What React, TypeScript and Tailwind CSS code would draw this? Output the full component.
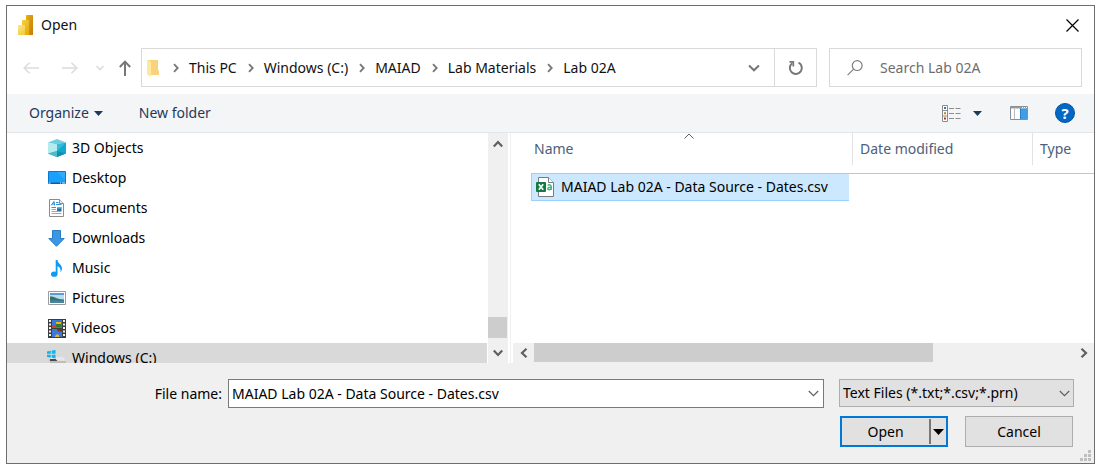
import React, { useState } from "react";

type IconProps = { className?: string };

function Chevron({ className = "", d, box = "0 0 12 12", stroke = 2, w = 12, h = 12 }: IconProps & { d: string; box?: string; stroke?: number; w?: number; h?: number }) {
  return (
    <svg aria-hidden="true" width={w} height={h} viewBox={box} fill="none" stroke="currentColor" strokeWidth={stroke} className={`shrink-0 ${className}`}>
      <path d={d} />
    </svg>
  );
}

const Caret = () => (
  <svg aria-hidden="true" width="9" height="5" viewBox="0 0 9 5" className="shrink-0 fill-[#1e395b]">
    <path d="M0 0H9L4.5 5Z" />
  </svg>
);

const PowerBiIcon = () => (
  <svg aria-hidden="true" width="15" height="20" viewBox="0 0 15 20" className="shrink-0">
    <defs>
      <linearGradient id="pb1" x1="0" y1="0" x2="1" y2="1"><stop stopColor="#e8b117" /><stop offset="1" stopColor="#c47a0a" /></linearGradient>
      <linearGradient id="pb2" x1="0" y1="0" x2="0.6" y2="1"><stop stopColor="#f5d13f" /><stop offset="1" stopColor="#e6ad10" /></linearGradient>
      <linearGradient id="pb3" x1="0" y1="0" x2="0.6" y2="1"><stop stopColor="#fae78c" /><stop offset="1" stopColor="#f2cf3e" /></linearGradient>
    </defs>
    <path d="M8.5 0H14.4Q15 0 15 .6V19.4Q15 20 14.4 20H8V.6Q8 0 8.5 0Z" fill="url(#pb1)" />
    <path d="M4.6 5H10.4Q11 5 11 5.6V20H4V5.6Q4 5 4.6 5Z" fill="url(#pb2)" />
    <path d="M.6 10H6.4Q7 10 7 10.6V20H.6Q0 20 0 19.4V10.6Q0 10 .6 10Z" fill="url(#pb3)" />
  </svg>
);

const FolderIcon = () => (
  <svg aria-hidden="true" width="12" height="18" viewBox="0 0 12 18" className="shrink-0">
    <path d="M1 1H10.5V11.5H12V16H1Z" fill="#f6cb63" />
    <path d="M4 3V16H12V12H11V1H1Z" fill="#f9d37b" />
    <path d="M0 1H1L4 3V18L0 15.5Z" fill="#ffe9a2" />
  </svg>
);

const BackIcon = () => <Chevron w={16} h={12} box="0 0 16 12" stroke={1.6} d="M6.5 .8 1.2 6 6.5 11.2M1.2 6H16" />;
const ForwardIcon = () => <Chevron w={16} h={12} box="0 0 16 12" stroke={1.6} d="M9.5 .8 14.8 6 9.5 11.2M14.8 6H0" />;
const UpIcon = () => <Chevron w={12} h={16} box="0 0 12 16" stroke={2} d="M.8 7 6 1.6 11.2 7M6 1.6V16" />;

const RefreshIcon = () => (
  <svg aria-hidden="true" width="16" height="16" viewBox="0 0 16 16" fill="none" stroke="#777" strokeWidth="2">
    <path d="M10.5 2.6A6 6 0 1 1 4.2 3.2" />
    <path d="M1.5 1.9H5.3V6.4" strokeWidth="1.7" />
  </svg>
);

const SearchIcon = () => (
  <svg aria-hidden="true" width="16" height="16" viewBox="0 0 16 16" fill="none" stroke="#7d7d7d" strokeWidth="1.2">
    <circle cx="10.2" cy="5.6" r="4.9" />
    <path d="M6.6 9.2.6 15.2" />
  </svg>
);

const ViewIcon = () => (
  <svg aria-hidden="true" width="19" height="17" viewBox="0 0 19 17">
    <path d="M.5 .5H5.5V16.5H.5ZM.5 5.5H5.5M.5 11H5.5" fill="#fff" stroke="#8c8c8c" />
    <path d="M7 3.5H12M13.5 3.5H18.5M7 8.5H12M13.5 8.5H18.5M7 13.5H12M13.5 13.5H18.5" stroke="#8c8c8c" />
    <path d="M2 2H4V4H2Z" fill="#3f73a8" />
    <path d="M2 7.3H4V9.3H2Z" fill="#b8862f" />
    <path d="M2 12.5H4V14.5H2Z" fill="#c42b1c" />
  </svg>
);

const PreviewPaneIcon = () => (
  <svg aria-hidden="true" width="18" height="14" viewBox="0 0 18 14">
    <path d="M.5 .5H17.5V13.5H.5Z" fill="#fff" stroke="#8a8f96" />
    <path d="M1 1H17V2.5H1Z" fill="#979ca2" />
    <path d="M12 1h1v1h-1zM14 1h1v1h-1zM16 1h1v1h-1z" fill="#fff" />
    <path d="M4.5 3V13" stroke="#b5bac0" />
    <path d="M10 2.5H17V13H10Z" fill="#429ce3" />
    <path d="M10.5 2.5V13" stroke="#2b7fc4" />
  </svg>
);

const ObjectsIcon = () => (
  <svg aria-hidden="true" width="18" height="18" viewBox="0 0 18 18">
    <path d="M0 3.5 9 5.2V18L0 14.6Z" fill="#a5e5ea" />
    <path d="M18 3.5 9 5.2V18L18 14.6Z" fill="#12a9cf" />
    <path d="M0 3.5 9 0 18 3.5 9 5.6Z" fill="#6ccfe0" />
    <path d="M0 14.6 9 12 18 14.6 9 18Z" fill="#1590a9" />
    <path d="M0 14.6 9 12V5.6L0 3.5Z" fill="#b4ebee" />
    <path d="M0 14.6 9 12V18Z" fill="#4bbcc9" />
    <path d="M9 5.6 18 3.5 9 12Z" fill="#35bbd9" />
  </svg>
);

const DesktopIcon = () => (
  <svg aria-hidden="true" width="18" height="14" viewBox="0 0 18 14">
    <path d="M.5 .5H17.5V12.5H.5Z" fill="#18a0fb" stroke="#0b78cf" />
    <path d="M9 1H17V9Z" fill="#43b4fc" opacity=".6" />
    <path d="M1 11.5H17V13H1Z" fill="#075fae" />
    <path d="M1 11.5H2.5V12.5H1ZM12 11.5H13V12.5H12ZM14 11.5H17V12.5H14Z" fill="#e3f3ff" />
  </svg>
);

const DocumentIcon = () => (
  <svg aria-hidden="true" width="15" height="18" viewBox="0 0 15 18">
    <path d="M.5 .5H10.5L14.5 4.5V17.5H.5Z" fill="#fff" stroke="#8b8b8b" />
    <path d="M10.5 .5V4.5H14.5" fill="#e8e8e8" stroke="#8b8b8b" />
    <path d="M2 6.5 5 2.5 5.5 6.5M3.3 5H5.3" fill="none" stroke="#1586d3" />
    <path d="M7 3.5H9.500M7 5.5H12.500M2.500 8.500H7" stroke="#2b93d8" />
    <path d="M2.500 10.500H7M2.500 12.500H12.500M2.500 14.500H12.500" stroke="#a6a6a6" />
    <path d="M8 8H12.500V12H8Z" fill="#2f6c96" />
    <path d="M8 8H12.500V9.500H8Z" fill="#5eb4e6" />
  </svg>
);

const DownloadIcon = () => (
  <svg aria-hidden="true" width="17" height="17" viewBox="0 0 17 17">
    <path d="M4.5 .5H12.5V8.5H16.2L8.5 16.3.8 8.5H4.5Z" fill="#3b97e3" stroke="#2a7cc6" />
  </svg>
);

const MusicIcon = () => (
  <svg aria-hidden="true" width="11" height="17" viewBox="0 0 11 17" fill="#0c9bf5">
    <ellipse cx="3.2" cy="14.2" rx="3.2" ry="2.6" />
    <path d="M4.7 0H6.5C6.7 3.5 11 4.5 11 8.5 11 10.2 10.3 11.3 9.5 12 10 8.5 8.5 7 6.5 6.3V14H4.7Z" />
  </svg>
);

const PictureIcon = () => (
  <svg aria-hidden="true" width="18" height="14" viewBox="0 0 18 14">
    <path d="M.5 .5H17.5V13.5H.5Z" fill="#fff" stroke="#9b9b9b" />
    <path d="M2 2H16V12H2Z" fill="#b9dcf5" />
    <path d="M2 2H16V4H2Z" fill="#5c9bd8" />
    <path d="M2 5.5C6 4.8 8 8 16 8.5V10H2Z" fill="#397567" />
    <path d="M2 9.5H16V12H2Z" fill="#4685a2" />
  </svg>
);

const VideoIcon = () => (
  <svg aria-hidden="true" width="18" height="19" viewBox="0 0 18 19">
    <path d="M0 0H18V19H0Z" fill="#3d3d3d" />
    <path d="M2 1V18M16 1V18" stroke="#f4f4f4" strokeWidth="2" strokeDasharray="2 1.5" />
    <path d="M4 1H14V9H4ZM4 10H14V18H4Z" fill="#3c78d8" />
    <path d="M4 6H8V9H4Z" fill="#d3402b" />
    <path d="M8 3H13V5H8Z" fill="#e9b71d" />
    <path d="M8 5H13V8H8Z" fill="#2f7d35" />
    <path d="M9 10H14V12.5H10Z" fill="#8b2a20" />
    <path d="M7 17 9 15 11 16V18H7Z" fill="#e5b32a" />
  </svg>
);

const DriveIcon = () => (
  <svg aria-hidden="true" width="20" height="19" viewBox="0 0 20 19">
    <path d="M3 8H17L20 12V16H3Z" fill="#e6e6e6" />
    <path d="M3 12H20V16H3Z" fill="#bdbdbd" />
    <path d="M3 10H9L11 12H3Z" fill="#4a4a4a" />
    <path d="M0 2 4 1.3V4.5H0ZM5 1.2 9 .5V4.5H5ZM0 5.5H4V8.7L0 8ZM5 5.5H9V9.5L5 8.8Z" fill="#12b3ee" />
  </svg>
);

const CsvIcon = () => (
  <svg aria-hidden="true" width="18" height="20" viewBox="0 0 18 20" className="shrink-0">
    <path d="M2.5 .5H12.5L17.5 5.5V19.5H2.5Z" fill="#fff" stroke="#7b7b7b" />
    <path d="M12.5 .5V5.5H17.5" fill="#fff" stroke="#7b7b7b" />
    <rect y="5" width="10" height="10" rx="1" fill="#107c41" />
    <path d="M2.8 7.3 7.2 12.7M7.2 7.3 2.8 12.7" stroke="#fff" strokeWidth="1.7" />
    <path d="M11.8 8.3C13 7.5 15.2 7.5 15.2 9.5V13M15.2 10.3C13 10.1 11.8 10.7 11.8 11.7 11.8 13 14.2 13.2 15.2 11.7" fill="none" stroke="#2fb879" strokeWidth="1.4" />
  </svg>
);

const places = [
  { name: "3D Objects", icon: <ObjectsIcon /> },
  { name: "Desktop", icon: <DesktopIcon /> },
  { name: "Documents", icon: <DocumentIcon /> },
  { name: "Downloads", icon: <DownloadIcon /> },
  { name: "Music", icon: <MusicIcon /> },
  { name: "Pictures", icon: <PictureIcon /> },
  { name: "Videos", icon: <VideoIcon /> },
  { name: "Windows (C:)", icon: <DriveIcon />, current: true },
];

const crumbs = ["This PC", "Windows (C:)", "MAIAD", "Lab Materials", "Lab 02A"];

function TitleBar() {
  return (
    <header className="flex h-[38px] items-center gap-2 pr-[15px] pl-[11px]">
      <PowerBiIcon />
      <h1 className="flex-1">Open</h1>
      <button type="button" aria-label="Close" className="text-black">
        <Chevron w={13} h={13} box="0 0 13 13" stroke={1.2} d="M.5 .5 12.5 12.5M12.5 .5 .5 12.5" />
      </button>
    </header>
  );
}

function NavigationBar() {
  return (
    <div className="flex h-[50px] items-start pt-1 pr-3 pl-4">
      <div className="flex h-[39px] w-[118px] shrink-0 items-center text-[#dcdcdc]">
        <button type="button" aria-label="Back" className="mr-[23px]"><BackIcon /></button>
        <button type="button" aria-label="Forward" className="mr-[18px]"><ForwardIcon /></button>
        <button type="button" aria-label="Recent locations" className="mr-[15px]"><Chevron w={8} h={6} box="0 0 8 6" stroke={1.6} d="M.6 1 4 4.5 7.4 1" /></button>
        <button type="button" aria-label="Up" className="text-[#777]"><UpIcon /></button>
      </div>
      <div className="flex h-[39px] min-w-0 flex-1 border border-[#d9d9d9]">
        <nav aria-label="Address" className="flex min-w-0 flex-1 items-center pl-[5px]">
          <FolderIcon />
          <ol className="flex items-center pl-[3px] whitespace-nowrap">
            {crumbs.map((crumb) => (
              <li key={crumb} className="flex items-center">
                <Chevron w={6} h={10} box="0 0 6 10" stroke={1.8} d="M1 1.2 4.7 5 1 8.8" className="mr-[10px] ml-[11px] text-[#777]" />
                <a href="#">{crumb}</a>
              </li>
            ))}
          </ol>
          <button type="button" aria-label="Previous locations" className="mr-[14px] ml-auto text-[#777]">
            <Chevron w={12} h={8} box="0 0 12 8" d="M1 1.5 6 6.3 11 1.5" />
          </button>
        </nav>
        <button type="button" aria-label="Refresh" className="flex w-[42px] shrink-0 items-center justify-center border-l border-[#d9d9d9]">
          <RefreshIcon />
        </button>
      </div>
      <label className="ml-3 flex h-[39px] w-[253px] shrink-0 items-center gap-[17px] border border-[#d9d9d9] pl-[17px]">
        <SearchIcon />
        <input type="search" aria-label="Search Lab 02A" placeholder="Search Lab 02A" className="min-w-0 flex-1 bg-transparent outline-none placeholder:text-[#6d6d6d]" />
      </label>
    </div>
  );
}

function CommandBar() {
  return (
    <div className="flex h-[39px] items-center border-b border-[#e2e5e9] bg-[#f4f5f7] pr-[19px] pl-[22px] text-[#1e395b]">
      <button type="button" className="mr-9 flex items-center gap-[5px]">Organize <Caret /></button>
      <button type="button">New folder</button>
      <div className="ml-auto flex items-center">
        <button type="button" aria-label="Change your view" className="mr-3"><ViewIcon /></button>
        <button type="button" aria-label="More view options" className="mr-7"><Caret /></button>
        <button type="button" aria-label="Show the preview pane" className="mr-[27px]"><PreviewPaneIcon /></button>
        <button type="button" aria-label="Help" className="flex size-5 items-center justify-center rounded-full border border-[#08529c] bg-[#0069c8] text-[15px] leading-none font-bold text-white">?</button>
      </div>
    </div>
  );
}

function PlacesPane() {
  return (
    <aside className="flex w-[504px] shrink-0 overflow-hidden border-r border-[#f0f0f0]">
      <ul className="min-w-0 flex-1 text-black">
        {places.map((place) => (
          <li key={place.name}>
            <a href="#" className={`flex h-[30px] items-center pl-[40px] ${place.current ? "bg-[#d9d9d9]" : ""}`}>
              <span className="mr-[6px] flex w-[19px] shrink-0 justify-center">{place.icon}</span>
              {place.name}
            </a>
          </li>
        ))}
      </ul>
      <div className="mr-[2px] ml-px flex w-5 flex-col items-center bg-[#f0f0f0] text-[#606060]">
        <button type="button" aria-label="Scroll up" className="flex h-[21px] w-[19px] items-center justify-center self-start">
          <Chevron w={10} h={8} box="0 0 10 8" stroke={2.2} d="M.8 6.5 5 2 9.2 6.5" />
        </button>
        <div className="flex-1" />
        <div className="h-[21px] w-[19px] self-start bg-[#cdcdcd]" />
        <button type="button" aria-label="Scroll down" className="flex h-[25px] w-[19px] items-center justify-center self-start pt-1">
          <Chevron w={10} h={8} box="0 0 10 8" stroke={2.2} d="M.8 1.5 5 6 9.2 1.5" />
        </button>
      </div>
    </aside>
  );
}

function FilePane() {
  return (
    <section className="flex min-w-0 flex-1 flex-col pl-[2px]">
      <div className="relative min-h-0 flex-1 overflow-hidden pl-[18px]">
        <table className="w-full table-fixed border-collapse text-left">
          <colgroup>
            <col className="w-[322px]" />
            <col className="w-[180px]" />
            <col />
          </colgroup>
          <thead className="text-[#4c607a]">
            <tr className="h-10 align-top">
              <th className="p-0 font-normal" aria-sort="ascending">
                <div className="relative flex h-8 items-center border-r border-[#e2e2e2] pl-[3px]">
                  Name
                  <Chevron w={10} h={6} box="0 0 10 6" stroke={1} d="M.5 5.5 5 1 9.5 5.5" className="absolute top-0 left-[153px] text-[#606060]" />
                </div>
              </th>
              <th className="p-0 font-normal"><div className="flex h-8 items-center border-r border-[#e2e2e2] pl-[7px]">Date modified</div></th>
              <th className="p-0 font-normal"><div className="flex h-8 items-center pl-[7px]">Type</div></th>
            </tr>
          </thead>
          <tbody>
            <tr className="border-t border-[#99d1ff] text-black">
              <td className="p-0">
                <div className="mr-1 flex h-[27px] items-center gap-[7px] border-b border-l border-[#99d1ff] bg-[#cce8ff] pl-1 whitespace-nowrap">
                  <CsvIcon />
                  MAIAD Lab 02A - Data Source - Dates.csv
                </div>
              </td>
              <td />
              <td />
            </tr>
          </tbody>
        </table>
      </div>
      <div className="flex h-5 items-start bg-[#f0f0f0] text-[#606060]">
        <button type="button" aria-label="Scroll left" className="flex h-[19px] w-[21px] items-center justify-center">
          <Chevron w={8} h={10} box="0 0 8 10" stroke={2.2} d="M6.5 .8 2 5 6.5 9.2" />
        </button>
        <div className="flex flex-1"><div className="h-[19px] w-[74%] bg-[#cdcdcd]" /></div>
        <button type="button" aria-label="Scroll right" className="flex h-[19px] w-[21px] items-center justify-center">
          <Chevron w={8} h={10} box="0 0 8 10" stroke={2.2} d="M1.5 .8 6 5 1.5 9.2" />
        </button>
      </div>
    </section>
  );
}

function Footer() {
  const [name, setName] = useState("MAIAD Lab 02A - Data Source - Dates.csv");
  return (
    <footer className="flex flex-col items-end gap-2 bg-[#f0f0f0] pt-4 pr-5 pb-4 text-black">
      <div className="flex w-full items-start">
        <label htmlFor="file-name" className="w-[215px] shrink-0 text-right leading-[29px]">File name:</label>
        <div className="mr-[15px] ml-[6px] flex h-[29px] min-w-0 flex-1 items-center border border-[#7a7a7a] bg-white pr-1 pl-[3px]">
          <input id="file-name" value={name} onChange={(e) => setName(e.target.value)} className="min-w-0 flex-1 bg-transparent outline-none" />
          <button type="button" aria-label="Recent file names" className="text-[#606060]">
            <Chevron w={11} h={7} box="0 0 11 7" stroke={1.2} d="M.8 1 5.5 5.7 10.2 1" />
          </button>
        </div>
        <div className="relative w-[235px] shrink-0">
          <select aria-label="File type" className="h-7 w-full appearance-none border border-[#adadad] bg-[#e1e1e1] pr-5 pl-[3px]">
            <option>Text Files (*.txt;*.csv;*.prn)</option>
          </select>
          <Chevron w={11} h={7} box="0 0 11 7" stroke={1.2} d="M.8 1 5.5 5.7 10.2 1" className="pointer-events-none absolute top-[11px] right-1 text-[#606060]" />
        </div>
      </div>
      <div className="flex gap-[17px] pr-px">
        <div className="flex h-[31px] w-[108px] items-center border-2 border-[#0078d7] bg-[#e1e1e1]">
          <button type="button" className="flex-1">Open</button>
          <button type="button" aria-label="Open options" className="flex h-[25px] w-[17px] items-center justify-center border-l-2 border-[#777]">
            <svg aria-hidden="true" width="11" height="6" viewBox="0 0 11 6"><path d="M0 0H11L5.5 6Z" /></svg>
          </button>
        </div>
        <button type="button" className="h-[31px] w-[108px] border border-[#adadad] bg-[#e1e1e1]">Cancel</button>
      </div>
    </footer>
  );
}

const grip = [[8, 0], [4, 4], [8, 4], [0, 8], [4, 8], [8, 8]];

export default function App() {
  return (
    <div className="min-h-screen bg-white pt-[5px] pr-[3px] pb-[6px] pl-[6px] font-['Noto_Sans','Open_Sans',sans-serif] text-[14px] leading-5 text-[#111]">
      <main className="relative border border-[#6e6e6e] bg-white">
        <TitleBar />
        <NavigationBar />
        <CommandBar />
        <div className="flex h-[230px] overflow-hidden">
          <PlacesPane />
          <FilePane />
        </div>
        <Footer />
        <svg aria-hidden="true" width="11" height="11" viewBox="0 0 11 11" className="absolute right-[3px] bottom-[2px] fill-[#bfbfbf]">
          {grip.map(([x, y]) => <rect key={`${x}-${y}`} x={x} y={y} width="3" height="3" />)}
        </svg>
      </main>
    </div>
  );
}
